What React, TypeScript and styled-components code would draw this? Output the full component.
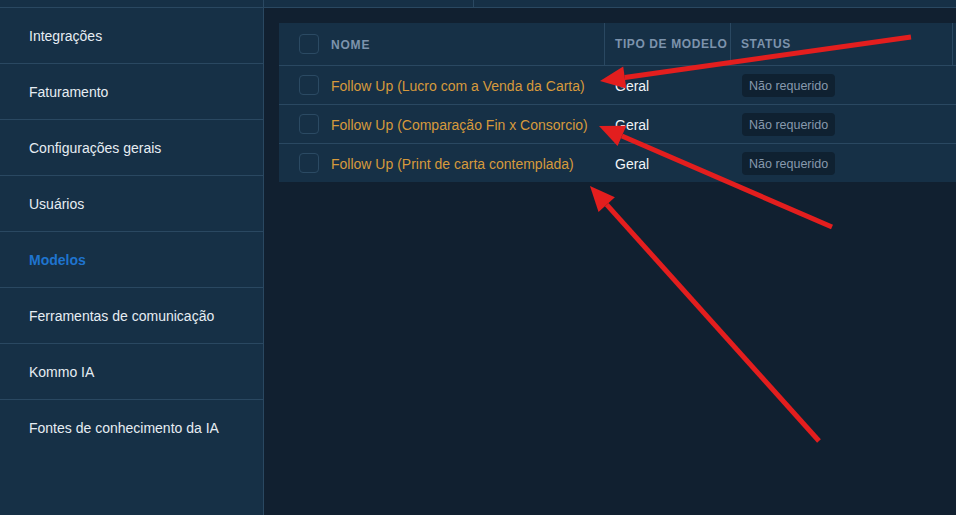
import React from 'react';
import styled, { createGlobalStyle } from 'styled-components';

const GlobalStyle = createGlobalStyle`
    html, body {
        margin: 0;
        padding: 0;
        background: #112030;
        overflow: hidden;
    }
    body {
        font-family: 'Liberation Sans', Arial, sans-serif;
        font-size: 14px;
    }
`

const Page = styled.div`
    display: flex;
    width: 956px;
    height: 515px;
    position: relative;
    overflow: hidden;
    background: #112030;
`

const Sidebar = styled.div`
    width: 263px;
    flex-shrink: 0;
    background: #163046;
    border-right: 1px solid #2a4861;
    display: flex;
    flex-direction: column;
`

const TopStrip = styled.div`
    height: 7px;
    flex-shrink: 0;
    background: #163046;
    border-bottom: 1px solid #2a4861;
    display: flex;
`

const TopCell = styled.div<{ $w?: number }>`
    width: ${p => (p.$w ? `${p.$w}px` : 'auto')};
    flex: ${p => (p.$w ? 'none' : '1')};
    border-right: ${p => (p.$w ? '1px solid #2a4861' : 'none')};
`

const MenuItem = styled.div<{ $active?: boolean; $last?: boolean }>`
    height: 55px;
    display: flex;
    align-items: center;
    padding-left: 29px;
    color: ${p => (p.$active ? '#1f74cf' : '#e6edf3')};
    font-weight: ${p => (p.$active ? 700 : 400)};
    border-bottom: ${p => (p.$last ? 'none' : '1px solid #2a4861')};
`

const Main = styled.div`
    flex: 1;
    display: flex;
    flex-direction: column;
    min-width: 0;
`

const Content = styled.div`
    padding: 15px 0 0 15px;
`

const Table = styled.div`
    width: 740px;
    background: #163046;
`

const HeadRow = styled.div`
    display: grid;
    grid-template-columns: 325px 127px 222px 1fr;
    height: 42px;
    border-bottom: 1px solid #2a4861;
`

const Row = styled.div<{ $last?: boolean }>`
    display: grid;
    grid-template-columns: 325px 127px 222px 1fr;
    height: 38px;
    border-bottom: ${p => (p.$last ? 'none' : '1px solid #2a4861')};
`

const HeadCell = styled.div<{ $divider?: boolean; $first?: boolean }>`
    display: flex;
    align-items: center;
    padding-left: 10px;
    color: #7d93ac;
    font-size: 12px;
    font-weight: 700;
    letter-spacing: 0.6px;
    text-transform: uppercase;
    white-space: nowrap;
    overflow: hidden;
    border-left: ${p => (p.$first ? '1px solid #2a4861' : 'none')};
    border-right: ${p => (p.$divider ? '1px solid #2a4861' : 'none')};
`

const NameCell = styled.div`
    display: flex;
    align-items: center;
    padding-left: 20px;
    gap: 12px;
`

const Cell = styled.div`
    display: flex;
    align-items: center;
    padding-left: 11px;
`

const Checkbox = styled.div`
    width: 18px;
    height: 18px;
    border: 1px solid #2b4a63;
    border-radius: 4px;
    flex-shrink: 0;
`

const NameText = styled.span<{ $head?: boolean }>`
    color: ${p => (p.$head ? '#7d93ac' : '#d69a3c')};
    font-size: ${p => (p.$head ? '12px' : '14px')};
    font-weight: ${p => (p.$head ? 700 : 400)};
    letter-spacing: ${p => (p.$head ? '0.8px' : '0')};
    text-transform: ${p => (p.$head ? 'uppercase' : 'none')};
    padding-top: 1px;
`

const TypeText = styled.span`
    color: #f1f4f7;
    padding-top: 1px;
`

const Badge = styled.span`
    display: inline-flex;
    align-items: center;
    height: 23px;
    padding: 0 7px;
    border-radius: 4px;
    background: #0f2131;
    color: #8799ad;
    font-size: 12.5px;
    margin-top: 1px;
`

const Overlay = styled.svg`
    position: absolute;
    left: 0;
    top: 0;
    pointer-events: none;
`

const menu = [
    'Integrações',
    'Faturamento',
    'Configurações gerais',
    'Usuários',
    'Modelos',
    'Ferramentas de comunicação',
    'Kommo IA',
    'Fontes de conhecimento da IA',
]

const rows = [
    'Follow Up (Lucro com a Venda da Carta)',
    'Follow Up (Comparação Fin x Consorcio)',
    'Follow Up (Print de carta contemplada)',
]

// red annotation arrows drawn over the screenshot
const arrows = [
    { x1: 911, y1: 37, x2: 600, y2: 81 },
    { x1: 832, y1: 227, x2: 599, y2: 126 },
    { x1: 819, y1: 441, x2: 590, y2: 186 },
]

const Arrow = ({ x1, y1, x2, y2 }: { x1: number; y1: number; x2: number; y2: number }) => {
    const a = Math.atan2(y1 - y2, x1 - x2)
    const len = 25
    const half = 11
    const bx = x2 + Math.cos(a) * len
    const by = y2 + Math.sin(a) * len
    const px = -Math.sin(a) * half
    const py = Math.cos(a) * half
    return (
        <g>
            <line x1={x1} y1={y1} x2={bx} y2={by} stroke="#e31e1e" strokeWidth={5} />
            <polygon points={`${x2},${y2} ${bx + px},${by + py} ${bx - px},${by - py}`} fill="#e31e1e" />
        </g>
    )
}

const App = () => {
    return (
        <Page>
            <GlobalStyle />
            <Sidebar>
                <TopStrip />
                {menu.map((m, i) => (
                    <MenuItem key={m} $active={m === 'Modelos'} $last={i === menu.length - 1}>
                        {m}
                    </MenuItem>
                ))}
            </Sidebar>
            <Main>
                <TopStrip>
                    <TopCell $w={209} />
                    <TopCell />
                </TopStrip>
                <Content>
                    <Table>
                        <HeadRow>
                            <NameCell>
                                <Checkbox />
                                <NameText $head>Nome</NameText>
                            </NameCell>
                            <HeadCell $divider $first>Tipo de modelo</HeadCell>
                            <HeadCell $divider>Status</HeadCell>
                            <HeadCell />
                        </HeadRow>
                        {rows.map((r, i) => (
                            <Row key={r} $last={i === rows.length - 1}>
                                <NameCell>
                                    <Checkbox />
                                    <NameText>{r}</NameText>
                                </NameCell>
                                <Cell>
                                    <TypeText>Geral</TypeText>
                                </Cell>
                                <Cell>
                                    <Badge>Não requerido</Badge>
                                </Cell>
                                <Cell />
                            </Row>
                        ))}
                    </Table>
                </Content>
            </Main>
            <Overlay width={956} height={515}>
                {arrows.map((a, i) => (
                    <Arrow key={i} {...a} />
                ))}
            </Overlay>
        </Page>
    )
}

export default App
